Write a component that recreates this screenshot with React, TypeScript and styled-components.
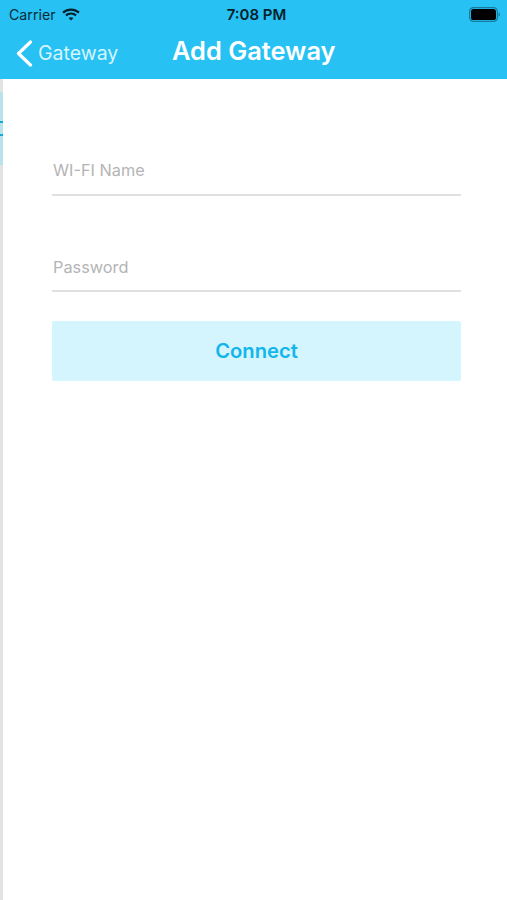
import React from "react";
import styled, { createGlobalStyle } from "styled-components";

const GlobalStyle = createGlobalStyle`
  html, body {
    margin: 0;
    padding: 0;
    background: #ffffff;
  }

  * {
    box-sizing: border-box;
  }
`;

const Screen = styled.div`
  width: 507px;
  height: 900px;
  display: flex;
  flex-direction: column;
  overflow: hidden;
  font-family: Inter, "Liberation Sans", sans-serif;
  background: #ffffff;
`;

const Header = styled.header`
  height: 79px;
  flex-shrink: 0;
  background: #27c2f3;
`;

const StatusBar = styled.div`
  height: 28px;
  padding: 0 7px 0 9px;
  display: grid;
  grid-template-columns: 1fr auto 1fr;
  align-items: center;
  color: #0a2a38;
  font-size: 14.2px;
`;

const StatusLeft = styled.div`
  display: flex;
  align-items: center;
  gap: 6px;
`;

const Clock = styled.div`
  padding-left: 4px;
  font-weight: 600;
  font-size: 15px;
  color: #06202c;
`;

const StatusRight = styled.div`
  display: flex;
  justify-content: flex-end;
`;

const NavBar = styled.div`
  height: 51px;
  padding: 0 0 7px 16px;
  display: flex;
  align-items: center;
`;

const BackLink = styled.div`
  width: 156px;
  padding-top: 6px;
  display: flex;
  align-items: center;
  gap: 5px;
  color: #d5f4fe;
  font-size: 19.5px;
`;

const Title = styled.h1`
  margin: 0;
  color: #ffffff;
  font-size: 25.4px;
  font-weight: 600;
`;

const Body = styled.div`
  flex: 1;
  display: flex;
`;

const EdgeStrip = styled.div`
  width: 3px;
  padding-top: 13px;
  background: #e3e3e3;
`;

const EdgeHighlight = styled.div`
  height: 73px;
  padding-top: 29px;
  display: flex;
  flex-direction: column;
  gap: 11px;
  background: #b9e3ea;
`;

const EdgeLine = styled.div`
  height: 2px;
  background: #18a8e0;
`;

const Form = styled.main`
  width: 409px;
  margin-left: 49px;
  padding-top: 73px;
  display: flex;
  flex-direction: column;
`;

const Field = styled.label<{ $gap?: number; $lift?: number }>`
  height: 44px;
  margin-top: ${(props) => props.$gap || 0}px;
  padding-bottom: ${(props) => props.$lift || 6}px;
  display: flex;
  align-items: center;
  border-bottom: 2px solid #e0e0e0;
`;

const Input = styled.input`
  width: 100%;
  padding: 0 0 0 1px;
  border: none;
  outline: none;
  background: transparent;
  font-family: inherit;
  font-size: 16.3px;
  color: #333333;

  &::placeholder {
    color: #b4b4b4;
    opacity: 1;
  }
`;

const ConnectButton = styled.button`
  height: 60px;
  margin-top: 29px;
  padding: 0 0 2px;
  border: none;
  border-radius: 2px;
  background: #d4f4fe;
  color: #12b6ec;
  font-family: inherit;
  font-size: 20.2px;
  font-weight: 600;
`;

export default function App() {
  return (
    <Screen>
      <GlobalStyle />
      <Header>
        <StatusBar>
          <StatusLeft>
            Carrier
            <svg width="18" height="13" viewBox="0 0 18 13" fill="none" stroke="#06202c" strokeWidth="2.2">
              <path d="M1 4.6C5.6 .5 12.4 .5 17 4.6" />
              <path d="M3.9 7.4C6.9 4.9 11.1 4.9 14.1 7.4" />
              <path d="M9 12.6 6.6 10.1C8 9.1 10 9.1 11.4 10.1Z" fill="#06202c" stroke="none" />
            </svg>
          </StatusLeft>
          <Clock>7:08 PM</Clock>
          <StatusRight>
            <svg width="31" height="15" viewBox="0 0 31 15">
              <rect x="0.6" y="0.6" width="27.8" height="13.8" rx="4" fill="none" stroke="#157a9c" strokeWidth="1.2" />
              <rect x="2" y="2" width="25" height="11" rx="2.6" fill="#000000" />
              <path d="M29.6 5.4C30.5 5.7 31 6.5 31 7.5S30.5 9.3 29.6 9.6Z" fill="#157a9c" />
            </svg>
          </StatusRight>
        </StatusBar>
        <NavBar>
          <BackLink>
            <svg width="17" height="27" viewBox="0 0 17 27" fill="none" stroke="#ffffff" strokeWidth="3.2" strokeLinecap="round" strokeLinejoin="round">
              <path d="M14.5 2 2.5 13.5 14.5 25" />
            </svg>
            Gateway
          </BackLink>
          <Title>Add Gateway</Title>
        </NavBar>
      </Header>
      <Body>
        <EdgeStrip>
          <EdgeHighlight>
            <EdgeLine />
            <EdgeLine />
          </EdgeHighlight>
        </EdgeStrip>
        <Form>
          <Field>
            <Input placeholder="WI-FI Name" />
          </Field>
          <Field $gap={52} $lift={4}>
            <Input placeholder="Password" type="password" />
          </Field>
          <ConnectButton>Connect</ConnectButton>
        </Form>
      </Body>
    </Screen>
  );
}
